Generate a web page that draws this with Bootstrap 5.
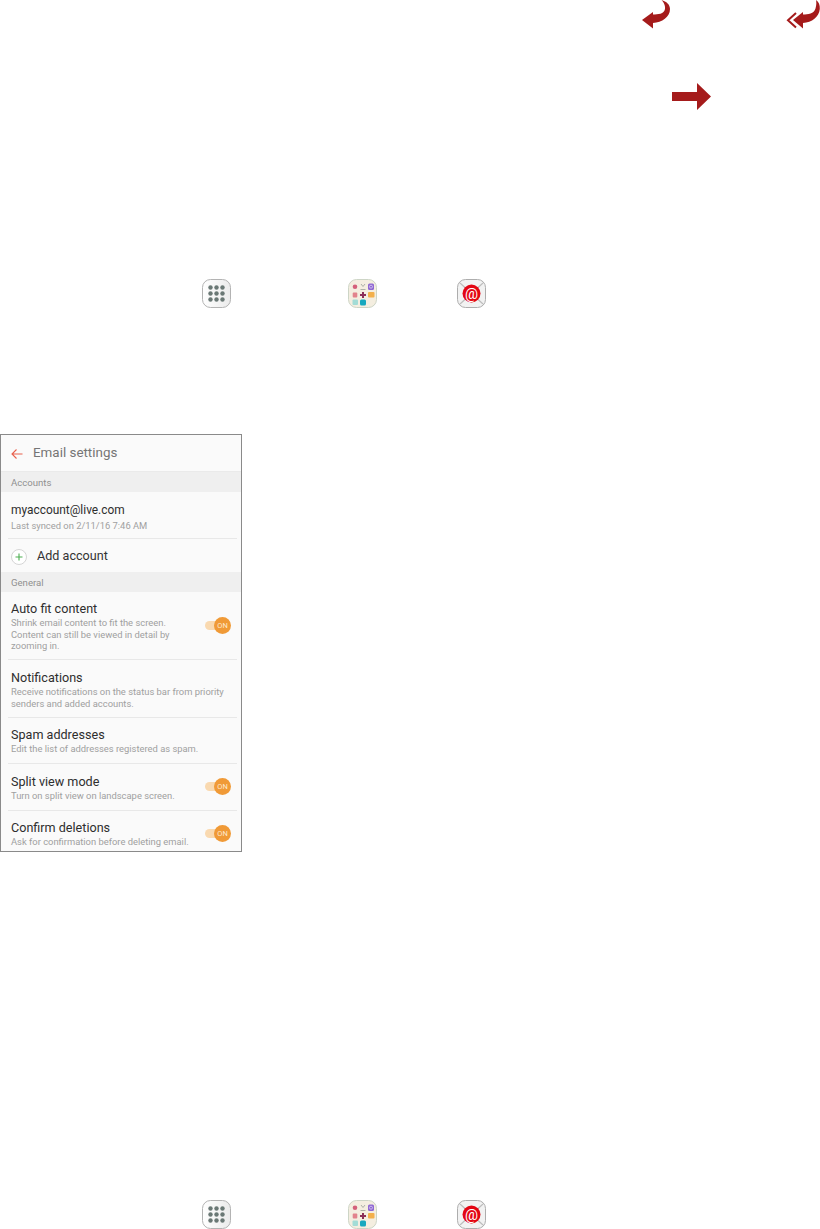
<!DOCTYPE html>
<html lang="en">
  <head>
    <meta charset="UTF-8" />
    <title>Email settings</title>
    <link rel="stylesheet" href="https://cdn.jsdelivr.net/npm/bootstrap@5.3.0/dist/css/bootstrap.min.css" />
    <style>
      body { background: #fff; font-family: Roboto, "Liberation Sans", sans-serif; overflow: hidden; }
      .page { width: 820px; height: 1229px; }
      .reply-row { height: 29px; padding-left: 641px; gap: 115px; }
      .forward-row { height: 27px; margin-top: 54px; padding-left: 672px; }
      .launch-row { height: 29px; padding-left: 202px; }
      .launch-top { margin-top: 169px; }
      .launch-bottom { margin-top: 348px; }
      .launch-row .apps { margin-left: 117px; }
      .launch-row .mail { margin-left: 80px; }
      .phone { width: 242px; height: 418px; margin-top: 126px; border: 1px solid #8a8a8a; background: #fafafa; overflow: hidden; }
      .phone-head { height: 37px; padding: 1px 0 0 10px; color: #757575; font-size: 13.4px; gap: 10px; border-bottom: 1px solid #eaeaea; }
      .band { height: 20px; padding-left: 10px; background: #efefef; color: #8f8f8f; font-size: 9.6px; line-height: 21px; }
      .set-row { margin: 0 4px 0 7px; padding: 9px 0 0 3px; border-bottom: 1px solid #e8e8e8; position: relative; }
      .set-row.roomy { padding-top: 10px; }
      .set-row.last { border-bottom: 0; }
      .set-title { color: #2e2e2e; font-size: 12.6px; line-height: 16px; }
      .set-title.addr { font-size: 11.9px; line-height: 17px; }
      .set-sub { color: #a0a0a0; font-size: 9.4px; line-height: 11.5px; }
      .set-sub.synced { margin-top: 1px; }
      .add-row { height: 33px; padding: 2px 0 0 10px; gap: 10px; color: #333; font-size: 12.6px; }
      .add-dot { width: 16px; height: 16px; }
      .toggle-wrap { position: absolute; right: 6px; top: 50%; margin-top: -9px; width: 26px; height: 17px; }
      .last .toggle-wrap { margin-top: -6px; }
      .toggle-track { position: absolute; left: 0; top: 4px; width: 20px; height: 9px; border-radius: 5px; background: #f9d9b0; }
      .toggle-knob { position: absolute; right: 0; top: 0; width: 17px; height: 17px; border-radius: 50%; background: #f09a37; color: #fde9cf; font-size: 7.5px; line-height: 17px; text-align: center; }
    </style>
  </head>
  <body>
    <svg width="0" height="0" class="position-absolute">
      <defs>
        <linearGradient id="keyGrad" x1="0" y1="0" x2="1" y2="0">
          <stop offset="0" stop-color="#ffffff" />
          <stop offset="1" stop-color="#ebebeb" />
        </linearGradient>
        <symbol id="appsKey" viewBox="0 0 29 29">
          <rect x="0.5" y="0.5" width="28" height="28" rx="8" fill="url(#keyGrad)" stroke="#b3b3b3" />
          <g fill="#6a7875">
            <circle cx="8.500" cy="8.500" r="2.200" /><circle cx="14.500" cy="8.500" r="2.200" /><circle cx="20.500" cy="8.500" r="2.200" />
            <circle cx="8.500" cy="14.500" r="2.200" /><circle cx="14.500" cy="14.500" r="2.200" /><circle cx="20.500" cy="14.500" r="2.200" />
            <circle cx="8.500" cy="20.500" r="2.200" /><circle cx="14.500" cy="20.500" r="2.200" /><circle cx="20.500" cy="20.500" r="2.200" />
          </g>
        </symbol>
        <symbol id="folderKey" viewBox="0 0 29 29">
          <rect x="0.5" y="0.5" width="28" height="28" rx="8" fill="#f4eee0" stroke="#cdd5c6" />
          <circle cx="7" cy="7.700" r="2.300" fill="#d4607a" />
          <path d="M13 5l2 2.500 2-2.500M12.500 10.500h5" fill="none" stroke="#9a9f98" stroke-width="0.800" />
          <rect x="20" y="4.500" width="6" height="6.500" rx="1.500" fill="#8f68d2" />
          <circle cx="23" cy="7.700" r="1.500" fill="none" stroke="#e4d9f7" stroke-width="0.700" />
          <rect x="4.700" y="13.500" width="4.600" height="5" rx="1" fill="#e2838c" />
          <path d="M15 13v6M12 16h6" stroke="#8c2f58" stroke-width="2" />
          <rect x="20" y="13" width="6.500" height="5.500" rx="1" fill="#f3b04c" />
          <rect x="4.500" y="20.500" width="5.500" height="5.500" rx="1" fill="#a3dcd6" />
          <rect x="12" y="20.500" width="6" height="6" rx="1.500" fill="#17a8bf" />
        </symbol>
        <symbol id="mailKey" viewBox="0 0 29 29">
          <rect x="0.5" y="0.5" width="28" height="28" rx="8" fill="#f2f2f2" stroke="#adadad" />
          <path d="M3 4l23 21M26 4L3 25" stroke="#bdbdbd" stroke-width="1.200" />
          <circle cx="14.500" cy="14.500" r="9" fill="#e30613" />
          <text x="14.500" y="19.500" text-anchor="middle" font-family="Roboto, sans-serif" font-size="14.500" fill="#fff">@</text>
        </symbol>
      </defs>
    </svg>

    <div class="page">
      <div class="reply-row d-flex">
        <svg width="30" height="29" viewBox="0 0 30 29">
          <path d="M1 20L12 12v2.500C17 14.500 23 14 24 9 24.600 5.500 22.500 2 20.500 0 25.500 1.500 29 4.500 29 9 29 17 21 22.500 12 23v5.500z" fill="#a51b1b" />
        </svg>
        <svg width="34" height="29" viewBox="0 0 34 29">
          <path d="M7 20L17 12v2.500C22 14.500 28 14 29.500 8.500 30.500 5 30.500 2 30 0 33 2 34 5 33.800 9 33 17 26 22.500 17 23v5.500z" fill="#a51b1b" />
          <path d="M10 13L2 20.300 10 27.500" fill="none" stroke="#a51b1b" stroke-width="2" />
        </svg>
      </div>
      <div class="forward-row d-flex">
        <svg width="39" height="27" viewBox="0 0 39 27">
          <path d="M0 9h25V0l14 13.500L25 27V18H0z" fill="#a51b1b" />
        </svg>
      </div>

      <div class="launch-row launch-top d-flex">
        <svg width="29" height="29"><use href="#appsKey" /></svg>
        <svg width="29" height="29" class="apps"><use href="#folderKey" /></svg>
        <svg width="29" height="29" class="mail"><use href="#mailKey" /></svg>
      </div>

      <div class="phone">
        <div class="phone-head d-flex align-items-center">
          <svg width="12" height="12" viewBox="0 0 12 12">
            <path d="M11.500 6H1M5.500 1.500L1 6l4.500 4.500" fill="none" stroke="#e8604c" stroke-width="1.100" />
          </svg>
          <span>Email settings</span>
        </div>
        <div class="band">Accounts</div>
        <div class="set-row roomy" style="height: 47px">
          <div class="set-title addr">myaccount@live.com</div>
          <div class="set-sub synced">Last synced on 2/11/16 7:46 AM</div>
        </div>
        <div class="add-row d-flex align-items-center">
          <svg class="add-dot" viewBox="0 0 16 16">
            <circle cx="8" cy="8" r="7.500" fill="#fff" stroke="#d5d5d5" />
            <path d="M8 4.500v7M4.500 8h7" stroke="#4cae50" stroke-width="1.100" />
          </svg>
          <span>Add account</span>
        </div>
        <div class="band">General</div>
        <div class="set-row" style="height: 68px">
          <div class="set-title">Auto fit content</div>
          <div class="set-sub">Shrink email content to fit the screen.<br />Content can still be viewed in detail by<br />zooming in.</div>
          <div class="toggle-wrap"><span class="toggle-track"></span><span class="toggle-knob">ON</span></div>
        </div>
        <div class="set-row roomy" style="height: 58px">
          <div class="set-title">Notifications</div>
          <div class="set-sub">Receive notifications on the status bar from priority<br />senders and added accounts.</div>
        </div>
        <div class="set-row" style="height: 46px">
          <div class="set-title">Spam addresses</div>
          <div class="set-sub">Edit the list of addresses registered as spam.</div>
        </div>
        <div class="set-row roomy" style="height: 47px">
          <div class="set-title">Split view mode</div>
          <div class="set-sub">Turn on split view on landscape screen.</div>
          <div class="toggle-wrap"><span class="toggle-track"></span><span class="toggle-knob">ON</span></div>
        </div>
        <div class="set-row last" style="height: 40px">
          <div class="set-title">Confirm deletions</div>
          <div class="set-sub">Ask for confirmation before deleting email.</div>
          <div class="toggle-wrap"><span class="toggle-track"></span><span class="toggle-knob">ON</span></div>
        </div>
      </div>

      <div class="launch-row launch-bottom d-flex">
        <svg width="29" height="29"><use href="#appsKey" /></svg>
        <svg width="29" height="29" class="apps"><use href="#folderKey" /></svg>
        <svg width="29" height="29" class="mail"><use href="#mailKey" /></svg>
      </div>
    </div>
    <script src="https://cdn.jsdelivr.net/npm/bootstrap@5.3.0/dist/js/bootstrap.bundle.min.js"></script>
  </body>
</html>
